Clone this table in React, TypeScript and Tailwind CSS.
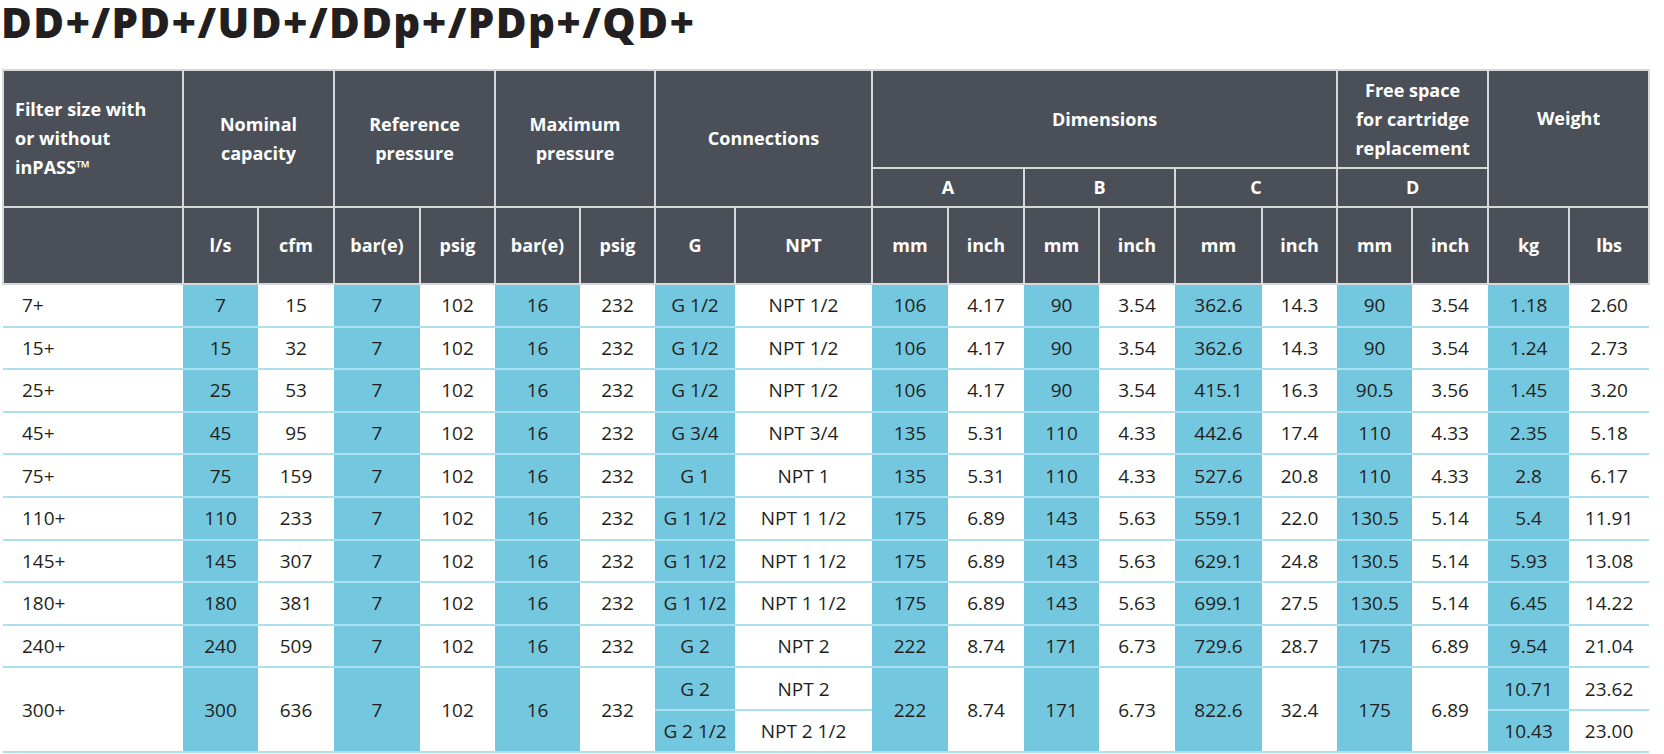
import React from "react";

const widths = [
  "w-[180px]", "w-[75px]", "w-[76px]", "w-[86px]", "w-[75px]", "w-[85px]", "w-[75px]",
  "w-[80px]", "w-[137px]", "w-[76px]", "w-[76px]", "w-[75px]", "w-[76px]", "w-[87px]",
  "w-[75px]", "w-[75px]", "w-[76px]", "w-[81px]", "w-[80px]",
];

const rows = [
  ["7+", "7", "15", "7", "102", "16", "232", "G 1/2", "NPT 1/2", "106", "4.17", "90", "3.54", "362.6", "14.3", "90", "3.54", "1.18", "2.60"],
  ["15+", "15", "32", "7", "102", "16", "232", "G 1/2", "NPT 1/2", "106", "4.17", "90", "3.54", "362.6", "14.3", "90", "3.54", "1.24", "2.73"],
  ["25+", "25", "53", "7", "102", "16", "232", "G 1/2", "NPT 1/2", "106", "4.17", "90", "3.54", "415.1", "16.3", "90.5", "3.56", "1.45", "3.20"],
  ["45+", "45", "95", "7", "102", "16", "232", "G 3/4", "NPT 3/4", "135", "5.31", "110", "4.33", "442.6", "17.4", "110", "4.33", "2.35", "5.18"],
  ["75+", "75", "159", "7", "102", "16", "232", "G 1", "NPT 1", "135", "5.31", "110", "4.33", "527.6", "20.8", "110", "4.33", "2.8", "6.17"],
  ["110+", "110", "233", "7", "102", "16", "232", "G 1 1/2", "NPT 1 1/2", "175", "6.89", "143", "5.63", "559.1", "22.0", "130.5", "5.14", "5.4", "11.91"],
  ["145+", "145", "307", "7", "102", "16", "232", "G 1 1/2", "NPT 1 1/2", "175", "6.89", "143", "5.63", "629.1", "24.8", "130.5", "5.14", "5.93", "13.08"],
  ["180+", "180", "381", "7", "102", "16", "232", "G 1 1/2", "NPT 1 1/2", "175", "6.89", "143", "5.63", "699.1", "27.5", "130.5", "5.14", "6.45", "14.22"],
  ["240+", "240", "509", "7", "102", "16", "232", "G 2", "NPT 2", "222", "8.74", "171", "6.73", "729.6", "28.7", "175", "6.89", "9.54", "21.04"],
];

const units = ["l/s", "cfm", "bar(e)", "psig", "bar(e)", "psig", "G", "NPT", "mm", "inch", "mm", "inch", "mm", "inch", "mm", "inch", "kg", "lbs"];

const th = "border-2 border-[#d6d8da] bg-[#4b5058] text-white font-bold text-[18px] leading-[29px] text-center align-middle p-0";
const blue = "bg-[#73c7df]";

function cellClass(i: number) {
  const base = "border-b-2 border-[#ade0ef] p-0 text-center align-middle";
  if (i === 0) return `${base} text-left pl-[19px]`;
  return i % 2 === 1 ? `${base} ${blue}` : base;
}

export default function App() {
  return (
    <div className="bg-white w-[1664px] h-[754px] overflow-hidden text-[#231f20]" style={{ fontFamily: '"Open Sans", sans-serif' }}>
      <h1 className="h-[69px] pl-[1px] pt-[1px] text-[42px] leading-[42px] font-extrabold tracking-[1.4px] text-[#231f20]">
        DD+/PD+/UD+/DDp+/PDp+/QD+
      </h1>

      <table className="ml-[2px] w-[1646px] table-fixed border-collapse">
        <colgroup>
          {widths.map((w, i) => (
            <col key={i} className={w} />
          ))}
        </colgroup>
        <thead>
          <tr className="h-[98px]">
            <th rowSpan={2} className={`${th} text-left pl-[11px]`}>
              Filter size with
              <br />
              or without
              <br />
              inPASS™
            </th>
            <th rowSpan={2} colSpan={2} className={th}>
              Nominal
              <br />
              capacity
            </th>
            <th rowSpan={2} colSpan={2} className={th}>
              Reference
              <br />
              pressure
            </th>
            <th rowSpan={2} colSpan={2} className={th}>
              Maximum
              <br />
              pressure
            </th>
            <th rowSpan={2} colSpan={2} className={th}>
              Connections
            </th>
            <th colSpan={6} className={th}>
              Dimensions
            </th>
            <th colSpan={2} className={th}>
              Free space
              <br />
              for cartridge
              <br />
              replacement
            </th>
            <th rowSpan={2} colSpan={2} className={`${th} pb-[40px]`}>
              Weight
            </th>
          </tr>
          <tr className="h-[39px]">
            <th colSpan={2} className={th}>A</th>
            <th colSpan={2} className={th}>B</th>
            <th colSpan={2} className={th}>C</th>
            <th colSpan={2} className={th}>D</th>
          </tr>
          <tr className="h-[77px]">
            <th className={th}></th>
            {units.map((u, i) => (
              <th key={i} className={th}>
                {u}
              </th>
            ))}
          </tr>
        </thead>
        <tbody className="text-[19px] leading-[24px]">
          {rows.map((r, ri) => (
            <tr key={ri} className="h-[42.6px]">
              {r.map((v, i) => (
                <td key={i} className={cellClass(i)}>
                  {v}
                </td>
              ))}
            </tr>
          ))}
          <tr className="h-[42.5px]">
            <td rowSpan={2} className={cellClass(0)}>300+</td>
            <td rowSpan={2} className={cellClass(1)}>300</td>
            <td rowSpan={2} className={cellClass(2)}>636</td>
            <td rowSpan={2} className={cellClass(3)}>7</td>
            <td rowSpan={2} className={cellClass(4)}>102</td>
            <td rowSpan={2} className={cellClass(5)}>16</td>
            <td rowSpan={2} className={cellClass(6)}>232</td>
            <td className={cellClass(7)}>G 2</td>
            <td className={cellClass(8)}>NPT 2</td>
            <td rowSpan={2} className={cellClass(9)}>222</td>
            <td rowSpan={2} className={cellClass(10)}>8.74</td>
            <td rowSpan={2} className={cellClass(11)}>171</td>
            <td rowSpan={2} className={cellClass(12)}>6.73</td>
            <td rowSpan={2} className={cellClass(13)}>822.6</td>
            <td rowSpan={2} className={cellClass(14)}>32.4</td>
            <td rowSpan={2} className={cellClass(15)}>175</td>
            <td rowSpan={2} className={cellClass(16)}>6.89</td>
            <td className={cellClass(17)}>10.71</td>
            <td className={cellClass(18)}>23.62</td>
          </tr>
          <tr className="h-[42.5px]">
            <td className={cellClass(7)}>G 2 1/2</td>
            <td className={cellClass(8)}>NPT 2 1/2</td>
            <td className={cellClass(17)}>10.43</td>
            <td className={cellClass(18)}>23.00</td>
          </tr>
        </tbody>
      </table>
    </div>
  );
}
